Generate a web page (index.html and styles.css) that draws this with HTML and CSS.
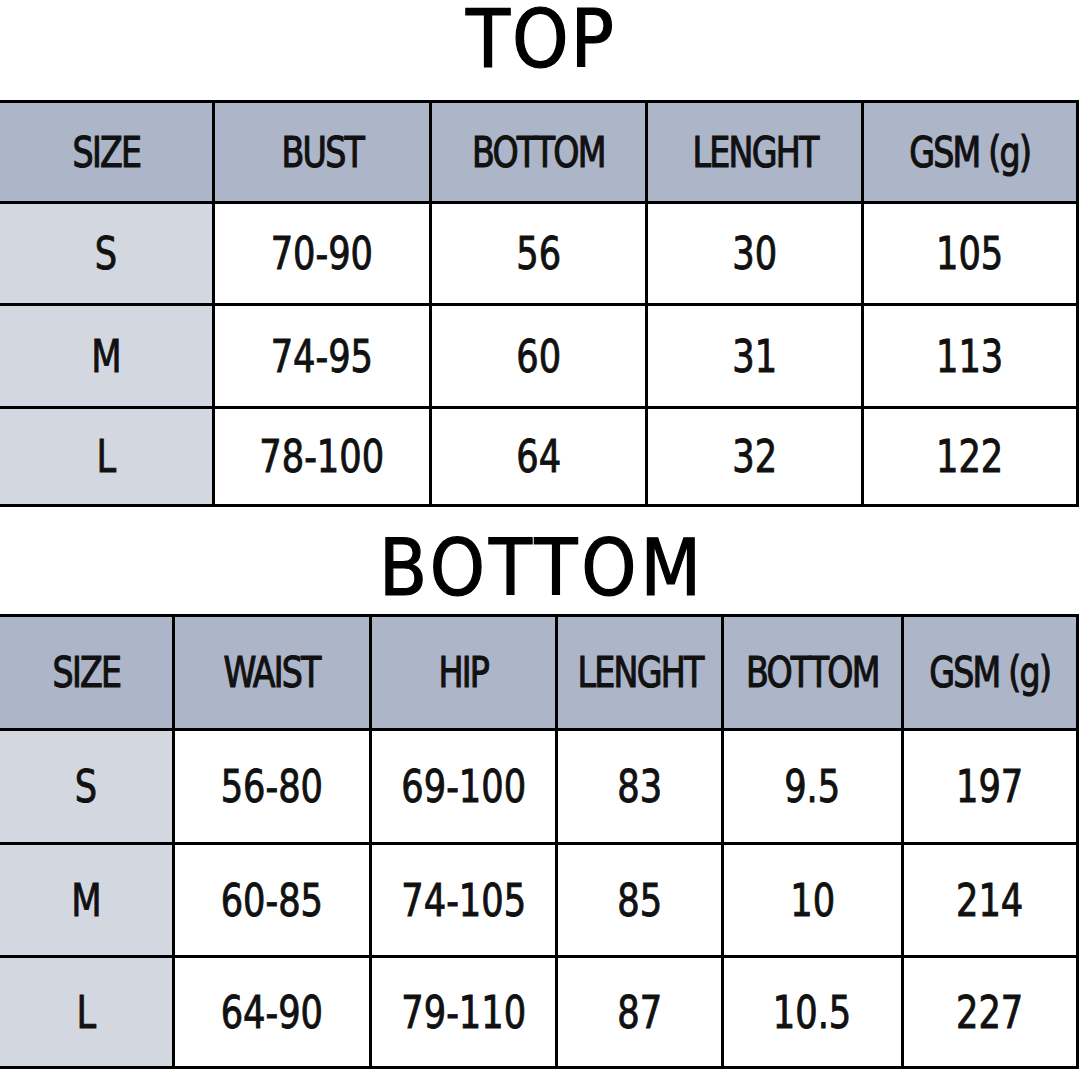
FILE: index.html
```html
<!DOCTYPE html>
<html>
<head>
<meta charset="utf-8">
<link rel="stylesheet" href="styles.css">
</head>
<body>
<div class="page">
  <h1 class="title title-top">TOP</h1>
  <div class="sheet sheet-top">
    <div class="cell head"><span class="txt">SIZE</span></div>
    <div class="cell head"><span class="txt">BUST</span></div>
    <div class="cell head"><span class="txt">BOTTOM</span></div>
    <div class="cell head"><span class="txt">LENGHT</span></div>
    <div class="cell head"><span class="txt">GSM (g)</span></div>

    <div class="cell size"><span class="txt">S</span></div>
    <div class="cell"><span class="txt">70-90</span></div>
    <div class="cell"><span class="txt">56</span></div>
    <div class="cell"><span class="txt">30</span></div>
    <div class="cell"><span class="txt">105</span></div>

    <div class="cell size"><span class="txt">M</span></div>
    <div class="cell"><span class="txt">74-95</span></div>
    <div class="cell"><span class="txt">60</span></div>
    <div class="cell"><span class="txt">31</span></div>
    <div class="cell"><span class="txt">113</span></div>

    <div class="cell size"><span class="txt">L</span></div>
    <div class="cell"><span class="txt">78-100</span></div>
    <div class="cell"><span class="txt">64</span></div>
    <div class="cell"><span class="txt">32</span></div>
    <div class="cell"><span class="txt">122</span></div>
  </div>

  <h1 class="title title-bottom">BOTTOM</h1>
  <div class="sheet sheet-bottom">
    <div class="cell head"><span class="txt">SIZE</span></div>
    <div class="cell head"><span class="txt">WAIST</span></div>
    <div class="cell head"><span class="txt">HIP</span></div>
    <div class="cell head"><span class="txt">LENGHT</span></div>
    <div class="cell head"><span class="txt">BOTTOM</span></div>
    <div class="cell head"><span class="txt">GSM (g)</span></div>

    <div class="cell size"><span class="txt">S</span></div>
    <div class="cell"><span class="txt">56-80</span></div>
    <div class="cell"><span class="txt">69-100</span></div>
    <div class="cell"><span class="txt">83</span></div>
    <div class="cell"><span class="txt">9.5</span></div>
    <div class="cell"><span class="txt">197</span></div>

    <div class="cell size"><span class="txt">M</span></div>
    <div class="cell"><span class="txt">60-85</span></div>
    <div class="cell"><span class="txt">74-105</span></div>
    <div class="cell"><span class="txt">85</span></div>
    <div class="cell"><span class="txt">10</span></div>
    <div class="cell"><span class="txt">214</span></div>

    <div class="cell size"><span class="txt">L</span></div>
    <div class="cell"><span class="txt">64-90</span></div>
    <div class="cell"><span class="txt">79-110</span></div>
    <div class="cell"><span class="txt">87</span></div>
    <div class="cell"><span class="txt">10.5</span></div>
    <div class="cell"><span class="txt">227</span></div>
  </div>
</div>
</body>
</html>
```

FILE: styles.css
```css
html, body {
  margin: 0;
  padding: 0;
  background: #ffffff;
}

.page {
  width: 1080px;
  height: 1080px;
  overflow: hidden;
  font-family: "DejaVu Sans Condensed", "DejaVu Sans", sans-serif;
  font-stretch: condensed;
  color: #111111;
}

.title {
  margin: 0;
  font-weight: normal;
  text-align: center;
  color: #000000;
  -webkit-text-stroke: 1.2px #000000;
}

.title-top {
  height: 100px;
  font-size: 80px;
  line-height: 80px;
  letter-spacing: 2px;
  padding-left: 2px;
  box-sizing: border-box;
}

.title-bottom {
  height: 107px;
  padding-top: 22px;
  box-sizing: border-box;
  font-size: 78px;
  line-height: 78px;
  letter-spacing: 4px;
  padding-left: 4px;
}

.sheet {
  display: grid;
  gap: 3px;
  background: #000000;
  padding: 3px 3px 3px 0;
  width: 1079px;
  box-sizing: border-box;
}

.sheet-top {
  grid-template-columns: 212px 214px 213px 213px 212px;
  grid-template-rows: 98px 99px 100px 95px;
}

.sheet-bottom {
  grid-template-columns: 172px 194px 183px 163px 177px 172px;
  grid-template-rows: 111px 111px 110px 108px;
}

.cell {
  background: #ffffff;
  display: flex;
  align-items: center;
  justify-content: center;
  font-size: 45px;
  white-space: nowrap;
  -webkit-text-stroke: 0.9px #111111;
}

.txt {
  display: inline-block;
  transform: scaleX(0.87);
  transform-origin: center;
}

.cell.head {
  background: #adb5c8;
  font-size: 42px;
  letter-spacing: -2px;
  -webkit-text-stroke: 1.1px #111111;
}

.cell.head .txt {
  transform: scaleX(0.88);
}

.cell.size {
  background: #d3d8e0;
}
```
